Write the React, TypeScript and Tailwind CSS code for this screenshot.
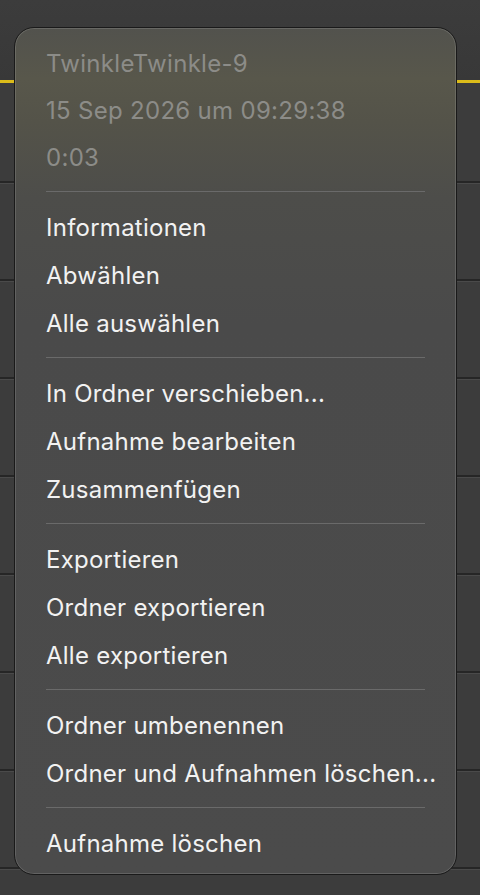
import React from 'react'

const groups: string[][] = [
  ['Informationen', 'Abwählen', 'Alle auswählen'],
  ['In Ordner verschieben...', 'Aufnahme bearbeiten', 'Zusammenfügen'],
  ['Exportieren', 'Ordner exportieren', 'Alle exportieren'],
  ['Ordner umbenennen', 'Ordner und Aufnahmen löschen...'],
  ['Aufnahme löschen'],
]

const header = ['TwinkleTwinkle-9', '15 Sep 2026 um 09:29:38', '0:03']

function Separator() {
  return (
    <div className="h-[22px] flex items-center">
      <div className="h-px w-full bg-[#6a6a6a]" />
    </div>
  )
}

export default function App() {
  const rows = Array.from({ length: 8 })

  return (
    <div
      className="relative w-[480px] h-[895px] overflow-hidden bg-[#3a3a3a]"
      style={{ fontFamily: 'Inter, "Open Sans", sans-serif' }}
    >
      {/* list behind the menu */}
      <div className="flex flex-col">
        <div className="h-[80px] bg-[linear-gradient(180deg,#3c3c3c,#383838)]" />
        <div className="h-[3px] bg-[#dcbc1a]" />
        <div className="h-[98px] bg-[#3c3c3c]" />
        {rows.map((_, i) => (
          <div key={i} className="flex flex-col">
            <div className="h-[3px] bg-[#262626] border-b border-[#4a4a4a]" />
            <div className="h-[95px] bg-[#3c3c3c]" />
          </div>
        ))}
      </div>

      {/* context menu */}
      <div className="absolute left-[14px] top-[27px] w-[443px] h-[848px] rounded-[20px] border border-[#1a1a1a] shadow-[inset_0_0_0_1px_rgba(255,255,255,0.13)] bg-[linear-gradient(180deg,#52524d_0%,#58574b_6%,#545349_11%,#4d4d4a_20%,#4a4a4a_35%,#4b4b4b_100%)]">
        <div className="flex flex-col px-[31px] pt-[11px] pb-[8px]">
          {header.map((t) => (
            <div key={t} className="h-[47px] pt-[2px] flex items-center text-[24px] text-[#8c8c88] tracking-[0.3px] whitespace-nowrap">
              {t}
            </div>
          ))}
          {groups.map((g, gi) => (
            <div key={gi} className="flex flex-col">
              <Separator />
              {g.map((label) => (
                <div key={label} className="h-[48px] pt-[3px] flex items-center text-[24px] text-[#f2f2f2] tracking-[0.25px] whitespace-nowrap">
                  {label}
                </div>
              ))}
            </div>
          ))}
        </div>
      </div>
    </div>
  )
}
